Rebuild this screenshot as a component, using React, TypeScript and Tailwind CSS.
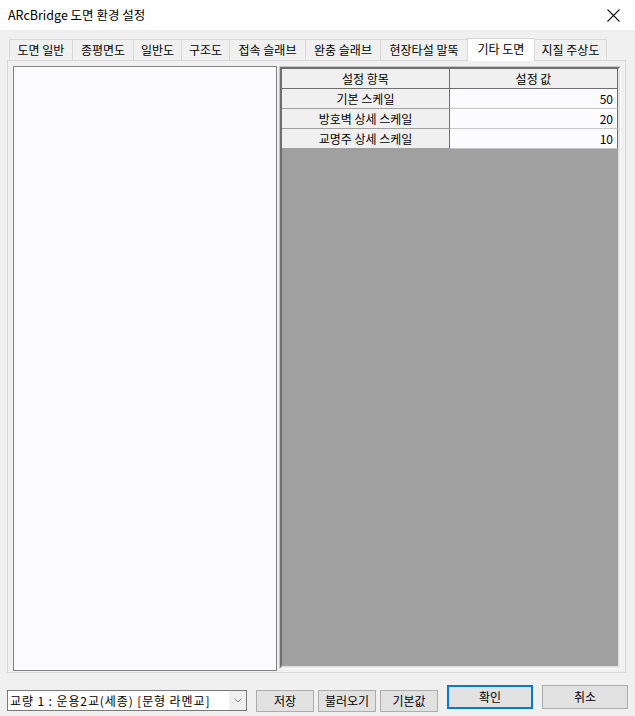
import React from "react";

const font = { fontFamily: '"Noto Sans CJK KR", "Noto Sans", sans-serif' };

const tabs = [
  { label: "도면 일반", w: 63 },
  { label: "종평면도", w: 61 },
  { label: "일반도", w: 48 },
  { label: "구조도", w: 48 },
  { label: "접속 슬래브", w: 76 },
  { label: "완충 슬래브", w: 75 },
  { label: "현장타설 말뚝", w: 87 },
  { label: "기타 도면", w: 67, active: true },
  { label: "지질 주상도", w: 72 },
];

const rows = [
  { name: "기본 스케일", value: "50" },
  { name: "방호벽 상세 스케일", value: "20" },
  { name: "교명주 상세 스케일", value: "10" },
];

function Tab({ label, w, active }: { label: string; w: number; active?: boolean }) {
  if (active) {
    return (
      <div
        className="relative z-10 -mb-px -ml-px flex h-[23px] shrink-0 items-center justify-center border border-b-0 border-[#d9d9d9] bg-white pb-[2px] text-[12px] text-black"
        style={{ width: w + 1 }}
      >
        {label}
      </div>
    );
  }
  return (
    <div
      className="-ml-px flex h-[21px] shrink-0 items-center justify-center border border-b-0 border-[#d9d9d9] bg-[#f0f0f0] text-[12px] text-black first:ml-0"
      style={{ width: w + 1 }}
    >
      {label}
    </div>
  );
}

function Button({ children, className }: { children: React.ReactNode; className: string }) {
  return (
    <div
      className={`flex shrink-0 items-center justify-center border border-[#adadad] bg-[#e1e1e1] text-[12px] text-black ${className}`}
    >
      {children}
    </div>
  );
}

export default function App() {
  return (
    <div className="flex h-[716px] w-[635px] flex-col overflow-hidden bg-[#f0f0f0]" style={font}>
      {/* title bar */}
      <div className="flex h-[30px] shrink-0 items-center justify-between bg-white pl-[8px] pr-[15px]">
        <span className="text-[12.5px] text-black">ARcBridge 도면 환경 설정</span>
        <svg width="13" height="13" viewBox="0 0 13 13">
          <path d="M0.5 0.5 L12.5 12.5 M12.5 0.5 L0.5 12.5" stroke="#111" strokeWidth="1.1" />
        </svg>
      </div>

      {/* tab headers */}
      <div className="ml-[9px] mt-[8px] flex h-[22px] items-end">
        {tabs.map((t) => (
          <Tab key={t.label} {...t} />
        ))}
      </div>

      {/* tab page */}
      <div className="ml-[7px] h-[613px] w-[619px] shrink-0 border border-[#d9d9d9] bg-[#f0f0f0] pl-[5px] pt-[5px]">
        <div className="flex items-start gap-[2px]">
          {/* list box */}
          <div className="h-[605px] w-[264px] border border-[#828282] bg-[#fbfaff]" />

          {/* settings grid */}
          <div className="h-[603px] w-[342px] border border-b-white border-l-[#c4c4c4] border-r-white border-t-[#c4c4c4]">
            <div className="flex h-full flex-col border-2 border-b-[#e3e3e3] border-l-[#6f6f6f] border-r-[#e3e3e3] border-t-[#6f6f6f] bg-[#a0a0a0]">
              <div className="flex h-[20px] border-b border-[#6f6f6f] bg-[#f0f0f0] text-[12px] text-black">
                <div className="flex w-[168px] items-center justify-center border-r border-[#6f6f6f]">설정 항목</div>
                <div className="flex flex-1 items-center justify-center border-r border-[#6f6f6f]">설정 값</div>
              </div>
              {rows.map((r) => (
                <div key={r.name} className="flex h-[20px] text-[12px] text-black">
                  <div className="flex w-[168px] items-center justify-center border-b border-r border-b-[#a0a0a0] border-r-[#6f6f6f] bg-[#f0f0f0]">
                    {r.name}
                  </div>
                  <div className="flex flex-1 items-center justify-end border-b border-r border-b-[#c8c8c8] border-r-[#6f6f6f] bg-[#fcfbff] pr-[4px]">
                    {r.value}
                  </div>
                </div>
              ))}
            </div>
          </div>
        </div>
      </div>

      {/* bottom bar */}
      <div className="mt-[12px] flex items-start">
        <div className="ml-[7px] mt-[5px] flex h-[21px] w-[240px] shrink-0 items-center border border-[#7a7a7a] bg-white">
          <span className="flex-1 whitespace-nowrap pl-[2px] text-[12px] leading-none tracking-[0.9px] text-black">
            교량 1 : 운용2교(세종) [문형 라멘교]
          </span>
          <div className="flex h-full w-[17px] items-center justify-center bg-[#f0f0f0]">
            <svg width="8" height="5" viewBox="0 0 8 5">
              <path d="M0.5 0.5 L4 4 L7.5 0.5" stroke="#8a8a8a" strokeWidth="1" fill="none" />
            </svg>
          </div>
        </div>
        <Button className="ml-[9px] mt-[5px] h-[22px] w-[58px]">저장</Button>
        <Button className="ml-[4px] mt-[5px] h-[22px] w-[58px]">불러오기</Button>
        <Button className="ml-[4px] mt-[5px] h-[22px] w-[58px]">기본값</Button>
        <div className="ml-[9px] flex h-[24px] w-[86px] shrink-0 items-center justify-center border-2 border-[#0078d7] bg-[#e1e1e1] text-[12px] text-black">
          확인
        </div>
        <Button className="ml-[9px] h-[24px] w-[86px]">취소</Button>
      </div>
    </div>
  );
}
